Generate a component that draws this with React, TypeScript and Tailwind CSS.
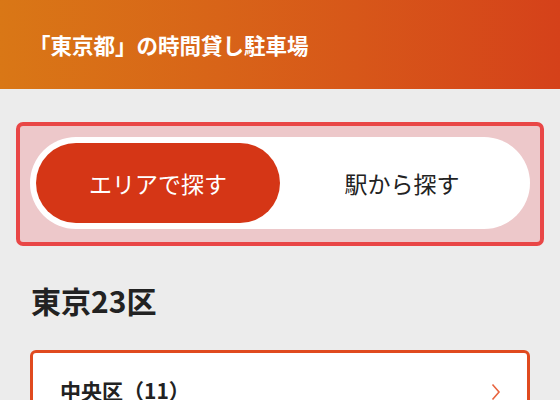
import React from "react";

export default function App() {
  return (
    <div
      className="w-[560px] h-[400px] overflow-hidden bg-[#ececec]"
      style={{ fontFamily: '"Noto Sans CJK JP", "Noto Sans", sans-serif' }}
    >
      <header className="h-[89px] flex items-center px-[29px] bg-gradient-to-r from-[#d97716] to-[#d5411a]">
        <h1 className="text-[21.5px] font-bold text-white leading-none">「東京都」の時間貸し駐車場</h1>
      </header>

      <div className="px-[16px] pt-[33px]">
        <div className="rounded-[7px] border-[4px] border-[#e94646] bg-[#edc8ca] px-[10px] pt-[11px] pb-[13px]">
          <div className="flex h-[92px] rounded-full bg-white p-[6px]">
            <button className="flex-1 rounded-full bg-[#d53616] text-white text-[23px] leading-none flex items-center justify-center">
              エリアで探す
            </button>
            <button className="flex-1 rounded-full text-[#222] text-[23px] leading-none flex items-center justify-center">
              駅から探す
            </button>
          </div>
        </div>
      </div>

      <div className="px-[30px]">
        <h2 className="mt-[39px] text-[30px] font-bold text-[#222] leading-none pl-[1px]">東京23区</h2>
        <div className="mt-[35px] h-[80px] rounded-[6px] border-[3px] border-[#e04a1f] bg-white flex items-start justify-between pl-[27px] pr-[26px] pt-[27px]">
          <span className="text-[21px] font-bold text-[#222] leading-none">中央区（11）</span>
          <svg width="10" height="18" viewBox="0 0 10 18" className="mt-[3px]">
            <path d="M1.5 1.5 L8 9 L1.5 16.5" fill="none" stroke="#e8643f" strokeWidth="1.6" />
          </svg>
        </div>
      </div>
    </div>
  );
}
